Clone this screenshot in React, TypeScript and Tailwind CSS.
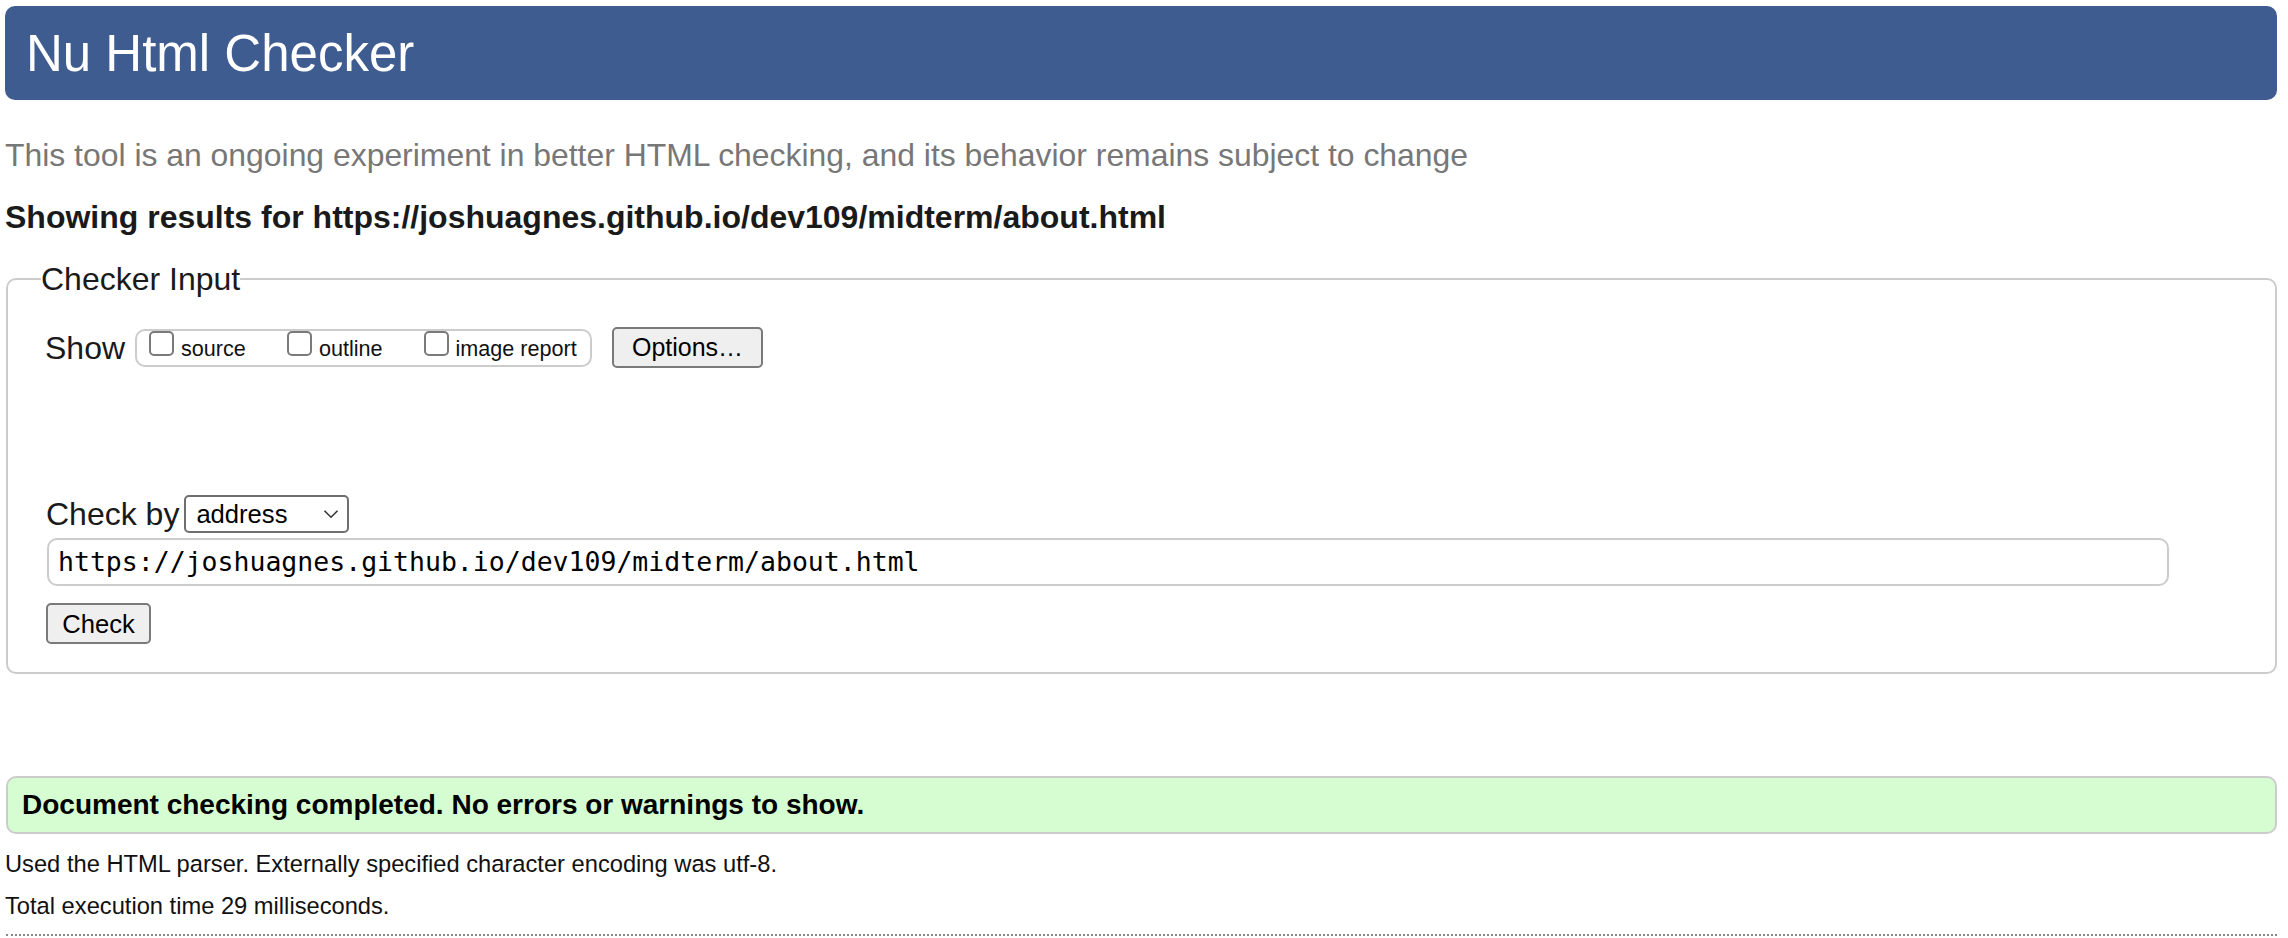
import React from "react";

function Chevron() {
  return (
    <svg width="16" height="10" viewBox="0 0 16 10" className="block">
      <path d="M1.5 1.8 L8 8.2 L14.5 1.8" fill="none" stroke="#333" strokeWidth="1.6" />
    </svg>
  );
}

function Box({ label }: { label: string }) {
  return (
    <label className="flex items-baseline">
      <input
        type="checkbox"
        className="appearance-none block w-[25px] h-[25px] border-2 border-[#7a7a7a] rounded-[5px] bg-white"
      />
      <span className="ml-[7px] text-[21.6px] leading-[22px] text-[#111]">{label}</span>
    </label>
  );
}

export default function App() {
  return (
    <div className="font-['Liberation_Sans',Arial,sans-serif] text-[32px] text-[#222] bg-white min-h-[938px] pl-[5px] pr-[11px] pt-[6px]">
      <header className="h-[94px] rounded-[10px] bg-[#3e5c8f] flex items-center pl-[21px]">
        <h1 className="text-[51px] leading-[51px] text-white font-normal">Nu Html Checker</h1>
      </header>

      <p className="mt-[35px] leading-[40px] text-[#777] text-[31.9px]">
        This tool is an ongoing experiment in better HTML checking, and its behavior remains subject to change
      </p>

      <h2 className="mt-[22px] leading-[40px] font-bold text-[#1a1a1a]">
        Showing results for https://joshuagnes.github.io/dev109/midterm/about.html
      </h2>

      <fieldset className="mt-[22px] ml-[1px] border-2 border-[#cccccc] rounded-[10px] pl-[38px] pr-[20px] pb-[28px]">
        <legend className="-ml-[5px] leading-[40px] text-[#1a1a1a]">Checker Input</legend>

        <div className="mt-[28px] flex items-center h-[41px]">
          <span className="leading-[40px] text-[#1a1a1a] -ml-[1px]">Show</span>
          <div className="ml-[10px] h-[38px] w-[457px] border-2 border-[#cccccc] rounded-[10px] pl-[12px] flex items-start gap-[41px]">
            <Box label="source" />
            <Box label="outline" />
            <Box label="image report" />
          </div>
          <button className="ml-[20px] w-[151px] h-[41px] border-2 border-[#7a7a7a] rounded-[5px] bg-[#efefef] text-[25px] leading-[25px] text-black flex items-center justify-center">
            Options…
          </button>
        </div>

        <div className="mt-[127px] flex items-center h-[38px]">
          <span className="leading-[40px] text-[#1a1a1a]">Check by</span>
          <div className="ml-[5px] w-[165px] h-[38px] border-2 border-[#6f6f6f] rounded-[5px] bg-white flex items-center justify-between pl-[10px] pr-[8px]">
            <span className="text-[25.6px] leading-[26px] text-black">address</span>
            <Chevron />
          </div>
        </div>

        <div className="mt-[5px] ml-[1px] w-[2122px] h-[48px] border-2 border-[#cccccc] rounded-[10px] bg-white flex items-center pl-[9px]">
          <span className="font-['DejaVu_Sans_Mono',monospace] text-[26.5px] leading-[30px] text-black">
            https://joshuagnes.github.io/dev109/midterm/about.html
          </span>
        </div>

        <button className="mt-[17px] block w-[105px] h-[41px] border-2 border-[#7a7a7a] rounded-[5px] bg-[#efefef] text-[25.6px] leading-[26px] text-black">
          Check
        </button>
      </fieldset>

      <div className="mt-[102px] ml-[1px] h-[58px] border-2 border-[#cccccc] rounded-[10px] bg-[#d6fdd2] flex items-center pl-[14px]">
        <span className="font-bold text-[28px] leading-[32px] text-black">
          Document checking completed. No errors or warnings to show.
        </span>
      </div>

      <p className="mt-[14px] text-[23.7px] leading-[32px] text-[#111]">
        Used the HTML parser. Externally specified character encoding was utf-8.
      </p>
      <p className="mt-[10px] text-[23.7px] leading-[32px] text-[#111]">
        Total execution time 29 milliseconds.
      </p>
      <div className="mt-[12px] ml-[1px] border-t-2 border-dotted border-[#888]" />
    </div>
  );
}
